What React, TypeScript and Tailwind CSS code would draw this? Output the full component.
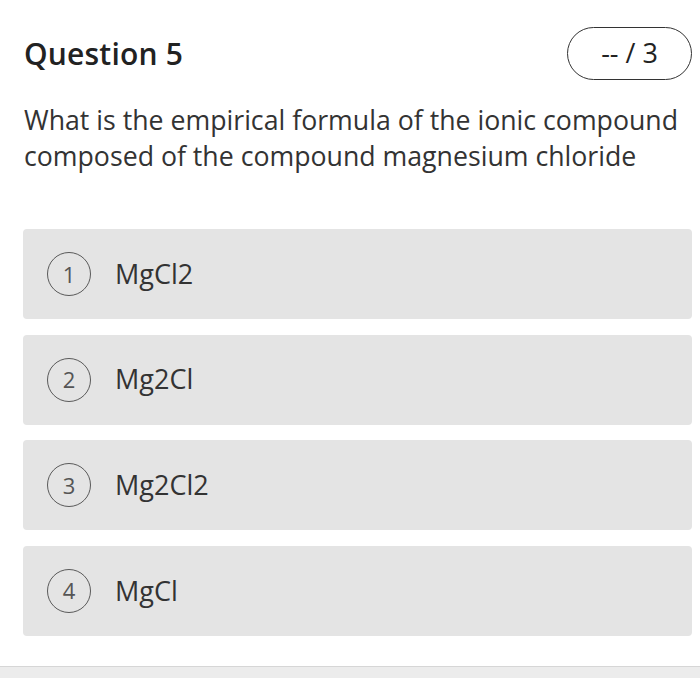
import React from "react";

const options = ["MgCl2", "Mg2Cl", "Mg2Cl2", "MgCl"];

export default function App() {
  return (
    <div className="w-[700px] h-[678px] bg-white flex flex-col text-[#333333] overflow-hidden" style={{ fontFamily: '"Open Sans", sans-serif' }}>
      <div className="flex items-center justify-between pl-6 pr-2 pt-[27px]">
        <h1 className="text-[30px] leading-[53px] font-semibold text-[#222] tracking-[0.2px]">Question 5</h1>
        <div className="h-[53px] w-[125px] rounded-full border-[1.5px] border-[#333] flex items-center justify-center text-[27px] text-[#222]">
          -- / 3
        </div>
      </div>
      <p className="pl-6 mt-[22px] text-[26.7px] leading-[36px] text-[#333] whitespace-nowrap">
        What is the empirical formula of the ionic compound
        <br />
        composed of the compound magnesium chloride
      </p>
      <div className="flex flex-col gap-[15.6px] mt-[55px] pl-[23px] pr-2">
        {options.map((o, i) => (
          <div key={o} className="h-[90px] rounded-[4px] bg-[#e4e4e4] flex items-center pl-[24px]">
            <div className="w-[44px] h-[44px] rounded-full border-[1.7px] border-[#5a5a5a] flex items-center justify-center text-[22px] text-[#555]">
              {i + 1}
            </div>
            <span className="ml-[24px] text-[27px] text-[#333]">{o}</span>
          </div>
        ))}
      </div>
      <div className="mt-auto h-[12px] bg-[#ececec] border-t border-[#d6d6d6]" />
    </div>
  );
}
